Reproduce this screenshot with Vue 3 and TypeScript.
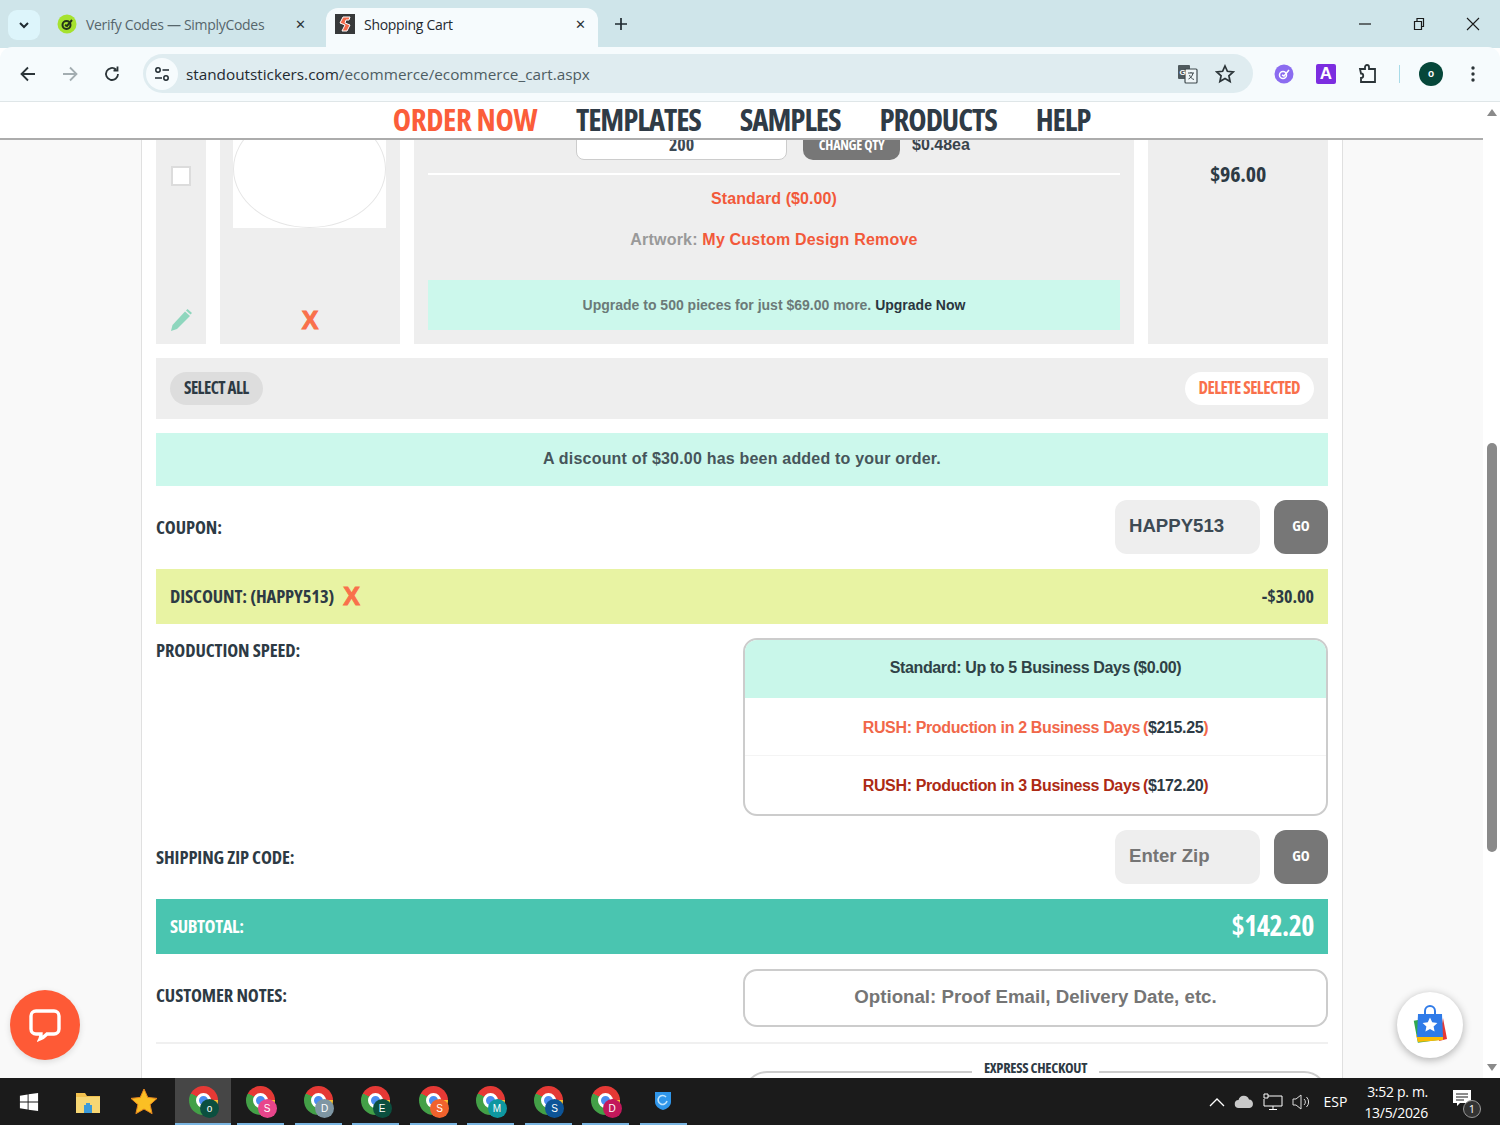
<script setup lang="ts">
const taskApps = [
  { letter: 'o', color: '#0b4f3f' },
  { letter: 'S', color: '#e8458b' },
  { letter: 'D', color: '#7e96a3' },
  { letter: 'E', color: '#0b4f3f' },
  { letter: 'S', color: '#f0622d' },
  { letter: 'M', color: '#0e97a0' },
  { letter: 'S', color: '#0d5497' },
  { letter: 'D', color: '#c2185b' },
]

const navLinks = ['TEMPLATES', 'SAMPLES', 'PRODUCTS', 'HELP']
</script>

<template>
  <div class="screen">
    <div class="tabstrip">
      <div class="tab-search">
        <svg width="12" height="12" viewBox="0 0 12 12"><path d="M2 4l4 4 4-4" fill="none" stroke="#1f2a30" stroke-width="2" /></svg>
      </div>
      <div class="tab">
        <svg class="favicon" width="20" height="20" viewBox="0 0 20 20">
          <circle cx="10" cy="10" r="9.5" fill="#a6e22e" />
          <circle cx="9.5" cy="11" r="4" fill="none" stroke="#24331a" stroke-width="2" />
          <path d="M8 11l2 1 5-6" fill="none" stroke="#24331a" stroke-width="2" />
        </svg>
        <span class="tab-title muted">Verify Codes — SimplyCodes</span>
        <span class="tab-close">✕</span>
      </div>
      <div class="tab active">
        <svg class="favicon" width="20" height="20" viewBox="0 0 20 20">
          <rect width="20" height="20" fill="#37393a" />
          <path d="M15 3H8L5 9l5 2-3 6h5l3-6-5-2 1-3h3z" fill="#f26a4b" stroke="#fff" stroke-width="1" />
        </svg>
        <span class="tab-title">Shopping Cart</span>
        <span class="tab-close">✕</span>
      </div>
      <svg class="plus" width="14" height="14" viewBox="0 0 14 14"><path d="M7 1v12M1 7h12" stroke="#1f2a30" stroke-width="1.7" /></svg>
      <div class="win-controls">
        <svg width="14" height="14" viewBox="0 0 14 14"><path d="M1 7h12" stroke="#1a1a1a" stroke-width="1.2" /></svg>
        <svg width="14" height="14" viewBox="0 0 14 14"><path d="M2.5 4.5h7v8h-7zM5 4.5V1.5h6.5v8h-2" fill="none" stroke="#1a1a1a" stroke-width="1.2" /></svg>
        <svg width="14" height="14" viewBox="0 0 14 14"><path d="M1 1l12 12M13 1L1 13" stroke="#1a1a1a" stroke-width="1.1" /></svg>
      </div>
    </div>

    <div class="toolbar">
      <svg class="tool-icon" width="18" height="18" viewBox="0 0 18 18"><path d="M16 9H3M9 2.5L2.5 9 9 15.5" fill="none" stroke="#2b3438" stroke-width="1.8" /></svg>
      <svg class="tool-icon" width="18" height="18" viewBox="0 0 18 18"><path d="M2 9h13M9 2.5L15.5 9 9 15.5" fill="none" stroke="#a3adb1" stroke-width="1.8" /></svg>
      <svg class="tool-icon" width="18" height="18" viewBox="0 0 18 18"><path d="M15 9a6 6 0 1 1-2-4.5M14.5 1.5v4h-4" fill="none" stroke="#2b3438" stroke-width="1.8" /></svg>
      <div class="omnibox">
        <div class="site-info">
          <svg width="16" height="16" viewBox="0 0 16 16">
            <circle cx="4" cy="4" r="2.2" fill="none" stroke="#1f2a30" stroke-width="1.5" />
            <path d="M8.500 4H15M1 12h7" stroke="#1f2a30" stroke-width="1.5" />
            <circle cx="12" cy="12" r="2.2" fill="none" stroke="#1f2a30" stroke-width="1.5" />
          </svg>
        </div>
        <span class="url">standoutstickers.com<span class="url-path">/ecommerce/ecommerce_cart.aspx</span></span>
        <svg class="translate" width="22" height="22" viewBox="0 0 22 22">
          <rect x="1" y="2" width="12" height="14" rx="1" fill="#4f5a5e" />
          <rect x="8" y="6" width="12" height="14" rx="1" fill="#eef5f7" stroke="#3f4a4e" stroke-width="1.2" />
          <text x="2.500" y="12" font-size="8" font-weight="700" fill="#fff" font-family="Liberation Sans">G</text>
          <path d="M11 10h6M14 9v1M16 10c-.5 3-2.500 5-4.500 6M12.500 12c.5 2 2.500 4 4.500 4.500" fill="none" stroke="#3f4a4e" stroke-width="1" />
        </svg>
        <svg width="20" height="20" viewBox="0 0 20 20"><path d="M10 2l2.400 5.300 5.800.6-4.300 3.900 1.200 5.700L10 14.600l-5.100 2.900 1.200-5.700L1.800 7.900l5.800-.6z" fill="none" stroke="#2b3438" stroke-width="1.7" /></svg>
      </div>
      <div class="ext-icons">
        <svg width="20" height="20" viewBox="0 0 20 20">
          <circle cx="10" cy="10" r="9.500" fill="#8b6cf0" />
          <circle cx="9" cy="11" r="3.500" fill="none" stroke="#fff" stroke-width="1.500" />
          <path d="M8 11l2 1 5-6" fill="none" stroke="#fff" stroke-width="1.500" />
        </svg>
        <span class="ext-a">A</span>
        <svg width="22" height="22" viewBox="0 0 22 22"><path d="M3 6h5V4a2 2 0 0 1 4 0v2h6v13H4v-4a2 2 0 0 0 0-4.500z" fill="none" stroke="#2b3438" stroke-width="1.800" /></svg>
        <span class="ext-sep"></span>
        <span class="avatar">o</span>
        <svg width="4" height="16" viewBox="0 0 4 16"><circle cx="2" cy="2" r="1.700" fill="#2b3438" /><circle cx="2" cy="8" r="1.700" fill="#2b3438" /><circle cx="2" cy="14" r="1.700" fill="#2b3438" /></svg>
      </div>
    </div>

    <div class="viewport">
      <div class="page">
        <nav class="site-nav">
          <a class="cond nav-link order">ORDER NOW</a>
          <a v-for="l in navLinks" :key="l" class="cond nav-link">{{ l }}</a>
        </nav>
        <div class="page-scroll">
          <main class="cart">
            <section class="cart-item">
              <div class="cell cell-check">
                <span class="checkbox"></span>
                <svg width="24" height="24" viewBox="0 0 24 24">
                  <path d="M2 23l1.500-6L16 3.500l5 4.500L8 21z" fill="#8ed6bd" />
                  <path d="M17 2.500l1.500-1.500 4.500 4-1.500 1.500z" fill="#8ed6bd" />
                </svg>
              </div>
              <div class="cell cell-art">
                <div class="art-box"><div class="art-oval"></div></div>
                <span class="x-mark big-x">X</span>
              </div>
              <div class="cell cell-details">
                <div class="qty-row">
                  <div class="qty-input"><span class="cond qty-val">200</span></div>
                  <div class="qty-btn"><span class="cond change-qty">CHANGE QTY</span></div>
                  <div class="each">$0.48ea</div>
                </div>
                <div class="divider"></div>
                <p class="standard">Standard ($0.00)</p>
                <p class="artwork"><span class="art-label">Artwork:</span> My Custom Design Remove</p>
                <div class="upgrade">Upgrade to 500 pieces for just $69.00 more. <b>Upgrade Now</b></div>
              </div>
              <div class="cell cell-price"><span class="cond price">$96.00</span></div>
            </section>

            <section class="select-bar">
              <span class="cond pill pill-select">SELECT ALL</span>
              <span class="cond pill pill-delete">DELETE SELECTED</span>
            </section>

            <section class="notice">A discount of $30.00 has been added to your order.</section>

            <section class="row">
              <h3 class="cond label">COUPON:</h3>
              <div class="field-group">
                <div class="code-input">HAPPY513</div>
                <div class="cond go">GO</div>
              </div>
            </section>

            <section class="discount-bar">
              <span class="discount-name">
                <span class="cond label">DISCOUNT: (HAPPY513)</span>
                <span class="x-mark">X</span>
              </span>
              <span class="cond discount-amt">-$30.00</span>
            </section>

            <section class="row row-top">
              <h3 class="cond label lb-speed">PRODUCTION SPEED:</h3>
              <div class="speed-box">
                <div class="speed selected">Standard: Up to 5 Business Days<span class="gap">(</span>$0.00)</div>
                <div class="speed rush2">RUSH: Production in 2 Business Days<span class="gap">(</span><span class="amt">$215.25</span>)</div>
                <div class="speed rush3">RUSH: Production in 3 Business Days<span class="gap">(</span><span class="amt">$172.20</span>)</div>
              </div>
            </section>

            <section class="row">
              <h3 class="cond label">SHIPPING ZIP CODE:</h3>
              <div class="field-group">
                <div class="code-input placeholder">Enter Zip</div>
                <div class="cond go">GO</div>
              </div>
            </section>

            <section class="subtotal">
              <span class="cond subtotal-label">SUBTOTAL:</span>
              <span class="cond subtotal-amt">$142.20</span>
            </section>

            <section class="row row-top">
              <h3 class="cond label lb-notes">CUSTOMER NOTES:</h3>
              <div class="notes-box">Optional: Proof Email, Delivery Date, etc.</div>
            </section>

            <div class="hr"></div>

            <section class="express">
              <div class="cond express-title"><span>EXPRESS CHECKOUT</span></div>
            </section>
          </main>
        </div>
      </div>

      <div class="scrollbar">
        <span class="arrow up"></span>
        <span class="thumb"></span>
        <span class="arrow down"></span>
      </div>

      <div class="chat-fab">
        <svg width="36" height="36" viewBox="0 0 36 36">
          <path d="M9 4h18a5 5 0 0 1 5 5v13a5 5 0 0 1-5 5h-7c-2 2-4 4-7 5 1-2 1-3 1-5H9a5 5 0 0 1-5-5V9a5 5 0 0 1 5-5z" fill="none" stroke="#fff" stroke-width="3.400" />
        </svg>
      </div>
      <div class="shop-fab">
        <svg width="40" height="40" viewBox="0 0 40 40">
          <path d="M4 15l24-3 3 23-24 2z" fill="#2fa84f" transform="rotate(-3 20 20)" />
          <path d="M33 13l4 21-8 2z" fill="#e53935" />
          <path d="M6 30l27 0 0 5-25 2z" fill="#fbbc05" />
          <path d="M8 9h24l1 23H7z" fill="#2f7be8" />
          <path d="M15 9V6a5 5 0 0 1 10 0v3" fill="none" stroke="#2f7be8" stroke-width="2" />
          <path d="M20 12.500l2.200 4.800 5.200.6-3.800 3.600 1 5.100-4.600-2.600-4.600 2.600 1-5.100-3.800-3.600 5.200-.6z" fill="#fff" />
        </svg>
      </div>
    </div>

    <footer class="taskbar">
      <svg class="win-logo" width="20" height="20" viewBox="0 0 22 22"><path d="M1 4l8.500-1.200v7.700H1zM10.500 2.600L21 1v9.500H10.500zM1 11.500h8.500v7.700L1 18zM10.500 11.500H21V21l-10.500-1.600z" fill="#fff" /></svg>
      <svg class="tb-slot" width="28" height="28" viewBox="0 0 28 28">
        <path d="M2 5h9l2 3h13v17H2z" fill="#f2c14e" />
        <rect x="2" y="9" width="24" height="16" fill="#f7d774" />
        <rect x="10" y="17" width="8" height="8" fill="#3b9ad9" />
        <rect x="12" y="15" width="4" height="2" fill="#3b9ad9" />
      </svg>
      <svg class="tb-slot" width="30" height="30" viewBox="0 0 30 30"><path d="M15 2l3.800 8.400 9.200 1-6.900 6.200 2 9.100L15 22l-8.100 4.700 2-9.100L2 11.400l9.200-1z" fill="#fbbf24" stroke="#e8871e" stroke-width="1" /></svg>
      <div v-for="(app, i) in taskApps" :key="i" class="task-app" :class="{ current: i === 0 }">
        <span class="chrome"><span class="chrome-core"></span></span>
        <span class="chrome-badge" :style="{ background: app.color }">{{ app.letter }}</span>
      </div>
      <div class="task-app shield">
        <svg width="18" height="20" viewBox="0 0 18 20"><path d="M1 1h16v10c0 4-4 7-8 8-4-1-8-4-8-8z" fill="#2f96ea" /><path d="M12 6a4.500 4.500 0 1 0 1 4" fill="none" stroke="#bfe3fb" stroke-width="1.600" /></svg>
      </div>

      <div class="tray">
        <svg width="16" height="10" viewBox="0 0 16 10"><path d="M1 9l7-7 7 7" fill="none" stroke="#fff" stroke-width="1.300" /></svg>
        <svg width="20" height="14" viewBox="0 0 20 14"><path d="M5 13a4 4 0 0 1-.5-8A5.500 5.500 0 0 1 15 4.500 4.300 4.300 0 0 1 15.500 13z" fill="#c9c9c9" /></svg>
        <svg width="20" height="18" viewBox="0 0 20 18"><path d="M5 3h14v10H1V6M10 13v3M6 16.500h8M1 1h4v4H1z" fill="none" stroke="#fff" stroke-width="1" /></svg>
        <svg width="20" height="18" viewBox="0 0 20 18"><path d="M1 6h3l5-4v14l-5-4H1zM12 6a4 4 0 0 1 0 6M14.500 4a7 7 0 0 1 0 10" fill="none" stroke="#ddd" stroke-width="1" /></svg>
        <span class="lang">ESP</span>
        <div class="clock"><span>3:52 p. m.</span><span>13/5/2026</span></div>
        <div class="notif">
          <svg width="20" height="18" viewBox="0 0 20 18"><path d="M1 1h18v13H8l-3 3v-3H1z" fill="#fff" /><path d="M4 5h12M4 8h12M4 11h8" stroke="#1b1b1b" stroke-width="1" /></svg>
          <span class="notif-count">1</span>
        </div>
      </div>
    </footer>
  </div>
</template>

<style>
html, body {
  margin: 0;
  height: 100%;
  overflow: hidden;
}
</style>

<style scoped>
* {
  box-sizing: border-box;
}
.screen {
  width: 1500px;
  height: 1125px;
  display: flex;
  flex-direction: column;
  overflow: hidden;
  font-family: 'Liberation Sans', Arial, sans-serif;
  color: #2d3a44;
}

/* heading face: Open Sans on its condensed width */
.cond {
  font-family: 'Open Sans', sans-serif;
  font-stretch: 75%;
  font-weight: 700;
  white-space: nowrap;
}

/* browser chrome */
.tabstrip {
  height: 48px;
  background: #cfe5ea;
  display: flex;
  align-items: flex-end;
  padding-left: 8px;
  font-family: 'Open Sans', 'Noto Sans', sans-serif;
}
.tab-search {
  width: 32px;
  height: 30px;
  margin-bottom: 8px;
  border-radius: 9px;
  background: #ddf5fb;
  display: flex;
  align-items: center;
  justify-content: center;
}
.tab {
  width: 286px;
  height: 40px;
  padding: 0 20px 8px 17px;
  display: flex;
  align-items: center;
  font-size: 14px;
}
.tab.active {
  width: 272px;
  background: #f6fbfd;
  border-radius: 12px 12px 0 0;
  padding: 0 12px 8px 9px;
}
.favicon {
  flex: none;
  margin-right: 9px;
}
.tab-title {
  flex: 1;
  color: #1f2a30;
  letter-spacing: -0.3px;
}
.tab-title.muted {
  color: #56666c;
}
.tab-close {
  font-size: 13px;
  color: #2b3438;
}
.plus {
  margin: 0 0 17px 16px;
}
.win-controls {
  margin-left: auto;
  margin-bottom: 17px;
  padding-right: 20px;
  display: flex;
  gap: 40px;
}
.toolbar {
  height: 55px;
  background: #f6fbfd;
  border-bottom: 1px solid #dfe6e8;
  border-radius: 12px 12px 0 0;
  display: flex;
  align-items: center;
  padding-left: 19px;
  margin-top: -1px;
}
.tool-icon {
  margin-right: 24px;
}
.tool-icon:nth-child(3) {
  margin-right: 22px;
}
.omnibox {
  width: 1110px;
  height: 39px;
  margin-top: -1px;
  background: #dfecf0;
  border-radius: 20px;
  display: flex;
  align-items: center;
  padding: 0 18px 0 3px;
  gap: 16px;
}
.site-info {
  width: 32px;
  height: 32px;
  border-radius: 50%;
  background: #f6fbfd;
  display: flex;
  align-items: center;
  justify-content: center;
  margin-right: -8px;
}
.url {
  flex: 1;
  font-family: 'Open Sans', 'Noto Sans', sans-serif;
  font-size: 15.3px;
  color: #1f2a30;
}
.url-path {
  color: #4e5d63;
}
.ext-icons {
  flex: 1;
  display: flex;
  align-items: center;
  padding-left: 21px;
}
.ext-a {
  width: 20px;
  height: 20px;
  margin-left: 22px;
  background: #7c2de0;
  color: #fff;
  border-radius: 2px;
  font-weight: 700;
  font-size: 17px;
  line-height: 20px;
  text-align: center;
}
.ext-icons > svg:nth-of-type(2) {
  margin-left: 21px;
}
.ext-sep {
  width: 1px;
  height: 18px;
  margin-left: 20px;
  background: #a8dbe8;
}
.avatar {
  width: 24px;
  height: 24px;
  margin-left: 19px;
  border-radius: 50%;
  background: #06473a;
  color: #fff;
  font-size: 10px;
  font-weight: 700;
  line-height: 23px;
  text-align: center;
}
.ext-icons > svg:last-child {
  margin-left: 28px;
}

/* page */
.viewport {
  flex: 1;
  min-height: 0;
  display: flex;
  position: relative;
  background: #f9f9f9;
}
.page {
  width: 1483px;
  display: flex;
  flex-direction: column;
}
.site-nav {
  height: 38px;
  flex: none;
  background: #fff;
  border-bottom: 2px solid #acacac;
  display: flex;
  justify-content: center;
  gap: 39px;
  position: relative;
  z-index: 2;
}
.nav-link {
  font-size: 31px;
  letter-spacing: -1.1px;
  line-height: 35px;
  color: #2f3b46;
}
.nav-link.order {
  letter-spacing: -0.4px;
  color: #fb5d3a;
}
.page-scroll {
  flex: 1;
  min-height: 0;
  overflow: hidden;
}
.cart {
  width: 1202px;
  height: 100%;
  margin-left: 141px;
  padding: 0 14px;
  background: #fff;
  border-left: 1px solid #e0e0e0;
  border-right: 1px solid #e0e0e0;
  display: flex;
  flex-direction: column;
}
.cart > section {
  flex: none;
}
.cart-item {
  height: 204px;
  display: grid;
  grid-template-columns: 50px 180px 720px 180px;
  gap: 14px;
  margin-bottom: 14px;
}
.cell {
  background: #eee;
  min-height: 0;
}
.cell-check {
  display: flex;
  flex-direction: column;
  align-items: center;
  justify-content: space-between;
  padding: 26px 0 12px;
}
.checkbox {
  width: 20px;
  height: 20px;
  background: #fff;
  border: 2px solid #dcdcdc;
}
.cell-art {
  display: flex;
  flex-direction: column;
  align-items: center;
  padding-bottom: 11px;
  overflow: hidden;
}
.art-box {
  width: 153px;
  height: 88px;
  margin-right: 2px;
  background: #fff;
  overflow: hidden;
}
.art-oval {
  width: 153px;
  height: 118px;
  margin-top: -30px;
  border-radius: 50%;
  border: 1px solid #e6e6e6;
}
.x-mark {
  font-weight: 700;
  color: #f9704b;
  font-size: 25px;
  line-height: 1;
  display: inline-block;
  -webkit-text-stroke: 1px #f9704b;
}
.big-x {
  margin-top: auto;
}
.cell-details {
  overflow: hidden;
  padding: 0 14px;
  text-align: center;
}
.qty-row {
  height: 40px;
  margin-top: -20px;
  padding-right: 2px;
  display: flex;
  justify-content: center;
  align-items: stretch;
}
.qty-input {
  width: 211px;
  background: #fff;
  border: 1px solid #ccc;
  border-radius: 8px;
  line-height: 47px;
  color: #3d4a54;
}
.qty-val {
  font-size: 18px;
}
.qty-btn {
  width: 97px;
  margin-left: 16px;
  background: #777;
  border-radius: 0 0 10px 10px;
  color: #fff;
  line-height: 49px;
}
.change-qty {
  font-size: 14px;
  letter-spacing: -0.3px;
}
.each {
  margin-left: 12px;
  font-weight: 700;
  font-size: 16px;
  line-height: 49px;
  color: #3a444c;
}
.divider {
  height: 2px;
  margin-top: 13px;
  background: #fff;
}
.standard {
  margin: 15px 0 0;
  font-size: 16px;
  line-height: 18px;
  font-weight: 700;
  letter-spacing: 0.1px;
  color: #f2593a;
}
.artwork {
  margin: 23px 0 0;
  font-size: 16px;
  line-height: 18px;
  font-weight: 700;
  letter-spacing: 0.2px;
  color: #f2593a;
}
.art-label {
  color: #999;
}
.upgrade {
  height: 50px;
  margin-top: 31px;
  background: #ccf8ec;
  font-size: 14px;
  line-height: 50px;
  font-weight: 700;
  color: #6b7a78;
}
.upgrade b {
  color: #2a3640;
}
.cell-price {
  padding-top: 19px;
  text-align: center;
  line-height: 28px;
}
.price {
  font-size: 22px;
  letter-spacing: -0.2px;
  color: #2d3a44;
}
.select-bar {
  height: 61px;
  margin-bottom: 14px;
  background: #eee;
  display: flex;
  align-items: center;
  justify-content: space-between;
  padding: 0 14px;
}
.pill {
  height: 33px;
  padding: 0 14px;
  border-radius: 17px;
  font-size: 17px;
  letter-spacing: -0.55px;
  line-height: 32px;
}
.pill-select {
  background: #ddd;
}
.pill-delete {
  background: #fff;
  color: #f9704b;
}
.notice {
  height: 53px;
  margin-bottom: 14px;
  background: #ccf8ec;
  text-align: center;
  font-size: 16px;
  font-weight: 700;
  letter-spacing: 0.2px;
  line-height: 52px;
  color: #46555a;
}
.row {
  display: flex;
  justify-content: space-between;
  align-items: center;
  margin-bottom: 15px;
}
.row-top {
  align-items: flex-start;
  margin-bottom: 14px;
}
.label {
  margin: 0;
  padding-bottom: 1px;
  font-size: 18.5px;
  letter-spacing: -0.1px;
  line-height: 24px;
  color: #2d3a44;
}
.lb-notes {
  padding-top: 14px;
}
.field-group {
  display: flex;
  gap: 14px;
}
.code-input {
  width: 145px;
  height: 54px;
  padding-left: 14px;
  background: #eee;
  border-radius: 12px;
  font-size: 18.6px;
  font-weight: 700;
  line-height: 52px;
  color: #3d4a54;
}
.code-input.placeholder {
  color: #757575;
}
.go {
  width: 54px;
  height: 54px;
  background: #777;
  border-radius: 12px;
  color: #fff;
  text-align: center;
  font-size: 15px;
  line-height: 51px;
}
.discount-bar {
  height: 55px;
  margin-bottom: 14px;
  padding: 0 14px;
  background: #e8f3a3;
  display: flex;
  align-items: center;
  justify-content: space-between;
}
.discount-name {
  display: flex;
  align-items: center;
  gap: 9px;
}
.discount-amt {
  padding-bottom: 2px;
  font-size: 18px;
}
.speed-box {
  width: 585px;
  height: 178px;
  border: 2px solid #ccc;
  border-radius: 14px;
  overflow: hidden;
  display: flex;
  flex-direction: column;
}
.speed {
  flex: 1;
  display: flex;
  align-items: center;
  justify-content: center;
  padding-bottom: 2px;
  font-size: 16px;
  font-weight: 700;
  letter-spacing: -0.36px;
  white-space: pre;
}
.speed.selected {
  background: #c9f7ea;
  color: #2f4246;
}
.speed.rush2 {
  padding: 2px 0 0;
  color: #f1674a;
  border-bottom: 1px solid #f4f4f4;
}
.speed.rush3 {
  padding: 2px 0 0;
  color: #ad2a14;
}
.speed .amt {
  color: #2d3a44;
}
.gap {
  margin-left: 3px;
}
.subtotal {
  height: 55px;
  margin-bottom: 15px;
  padding: 0 14px 3px;
  background: #4ac5b0;
  color: #fff;
  display: flex;
  align-items: center;
  justify-content: space-between;
}
.subtotal-label {
  font-size: 18.5px;
  letter-spacing: -0.4px;
}
.subtotal-amt {
  font-size: 28px;
  letter-spacing: -0.5px;
}
.notes-box {
  width: 585px;
  height: 58px;
  border: 2px solid #ccc;
  border-radius: 14px;
  text-align: center;
  font-size: 18.7px;
  font-weight: 700;
  line-height: 51px;
  color: #757575;
}
.hr {
  height: 2px;
  flex: none;
  background: #f0f0f0;
  margin-top: 1px;
}
.express {
  width: 585px;
  height: 40px;
  margin: 27px 0 0 auto;
  border: 2px solid #ccc;
  border-radius: 24px 24px 0 0;
  position: relative;
}
.express-title {
  position: absolute;
  top: -14px;
  left: 0;
  right: 0;
  text-align: center;
  font-size: 14.5px;
  letter-spacing: -0.3px;
  line-height: 18px;
}
.express-title span {
  background: #fff;
  padding: 0 12px;
}

.scrollbar {
  width: 17px;
  position: relative;
  background: #fff;
}
.thumb {
  position: absolute;
  top: 341px;
  left: 4px;
  width: 10px;
  height: 409px;
  border-radius: 5px;
  background: #8a8a8a;
}
.arrow {
  position: absolute;
  left: 4px;
  border-left: 5px solid transparent;
  border-right: 5px solid transparent;
}
.arrow.up {
  top: 7px;
  border-bottom: 7px solid #8a8a8a;
}
.arrow.down {
  bottom: 7px;
  border-top: 7px solid #8a8a8a;
}

.chat-fab {
  position: absolute;
  left: 10px;
  top: 888px;
  width: 70px;
  height: 70px;
  border-radius: 50%;
  background: #fe5a36;
  display: flex;
  align-items: center;
  justify-content: center;
  box-shadow: 0 2px 6px rgba(0, 0, 0, 0.12);
}
.shop-fab {
  position: absolute;
  left: 1397px;
  top: 890px;
  width: 66px;
  height: 66px;
  border-radius: 50%;
  background: #fff;
  display: flex;
  align-items: center;
  justify-content: center;
  box-shadow: 0 2px 8px rgba(0, 0, 0, 0.3);
}

/* taskbar */
.taskbar {
  height: 47px;
  flex: none;
  background: #1b1b1b;
  display: flex;
  align-items: center;
  color: #fff;
  font-family: 'Open Sans', 'Noto Sans', sans-serif;
}
.win-logo {
  margin-left: 19px;
}
.tb-slot:nth-of-type(2) {
  margin-left: 35px;
}
.tb-slot:nth-of-type(3) {
  margin-left: 27px;
  margin-right: 16px;
}
.task-app {
  width: 47px;
  height: 47px;
  margin-right: 10.5px;
  position: relative;
  display: flex;
  align-items: center;
  justify-content: center;
  border-bottom: 2px solid #79b4e0;
}
.task-app.current {
  width: 56px;
  margin-right: 6px;
  background: #464646;
}
.chrome {
  width: 29px;
  height: 29px;
  border-radius: 50%;
  background: conic-gradient(from -60deg, #e53935 0 150deg, #fbc02d 150deg 240deg, #43a047 240deg 360deg);
  display: flex;
  align-items: center;
  justify-content: center;
}
.chrome-core {
  width: 15px;
  height: 15px;
  border-radius: 50%;
  background: #4b8df0;
  border: 3px solid #fff;
}
.chrome-badge {
  position: absolute;
  left: 50%;
  top: 21px;
  width: 19px;
  height: 19px;
  margin-left: -3px;
  border-radius: 50%;
  font-family: 'Liberation Sans', sans-serif;
  font-size: 10px;
  line-height: 19px;
  text-align: center;
  color: #fff;
}
.tray {
  margin-left: auto;
  display: flex;
  align-items: center;
  gap: 9px;
  padding-right: 24px;
}
.lang {
  margin: 0 8px 0 3px;
  font-size: 14px;
}
.clock {
  display: flex;
  flex-direction: column;
  align-items: flex-end;
  font-size: 14px;
  line-height: 21px;
  margin-right: 15px;
  letter-spacing: -0.3px;
}
.notif {
  position: relative;
  width: 24px;
  height: 26px;
}
.notif-count {
  position: absolute;
  right: -5px;
  bottom: -3px;
  width: 18px;
  height: 18px;
  border-radius: 50%;
  background: #333;
  border: 1px solid #999;
  font-size: 11px;
  line-height: 16px;
  text-align: center;
}
</style>
